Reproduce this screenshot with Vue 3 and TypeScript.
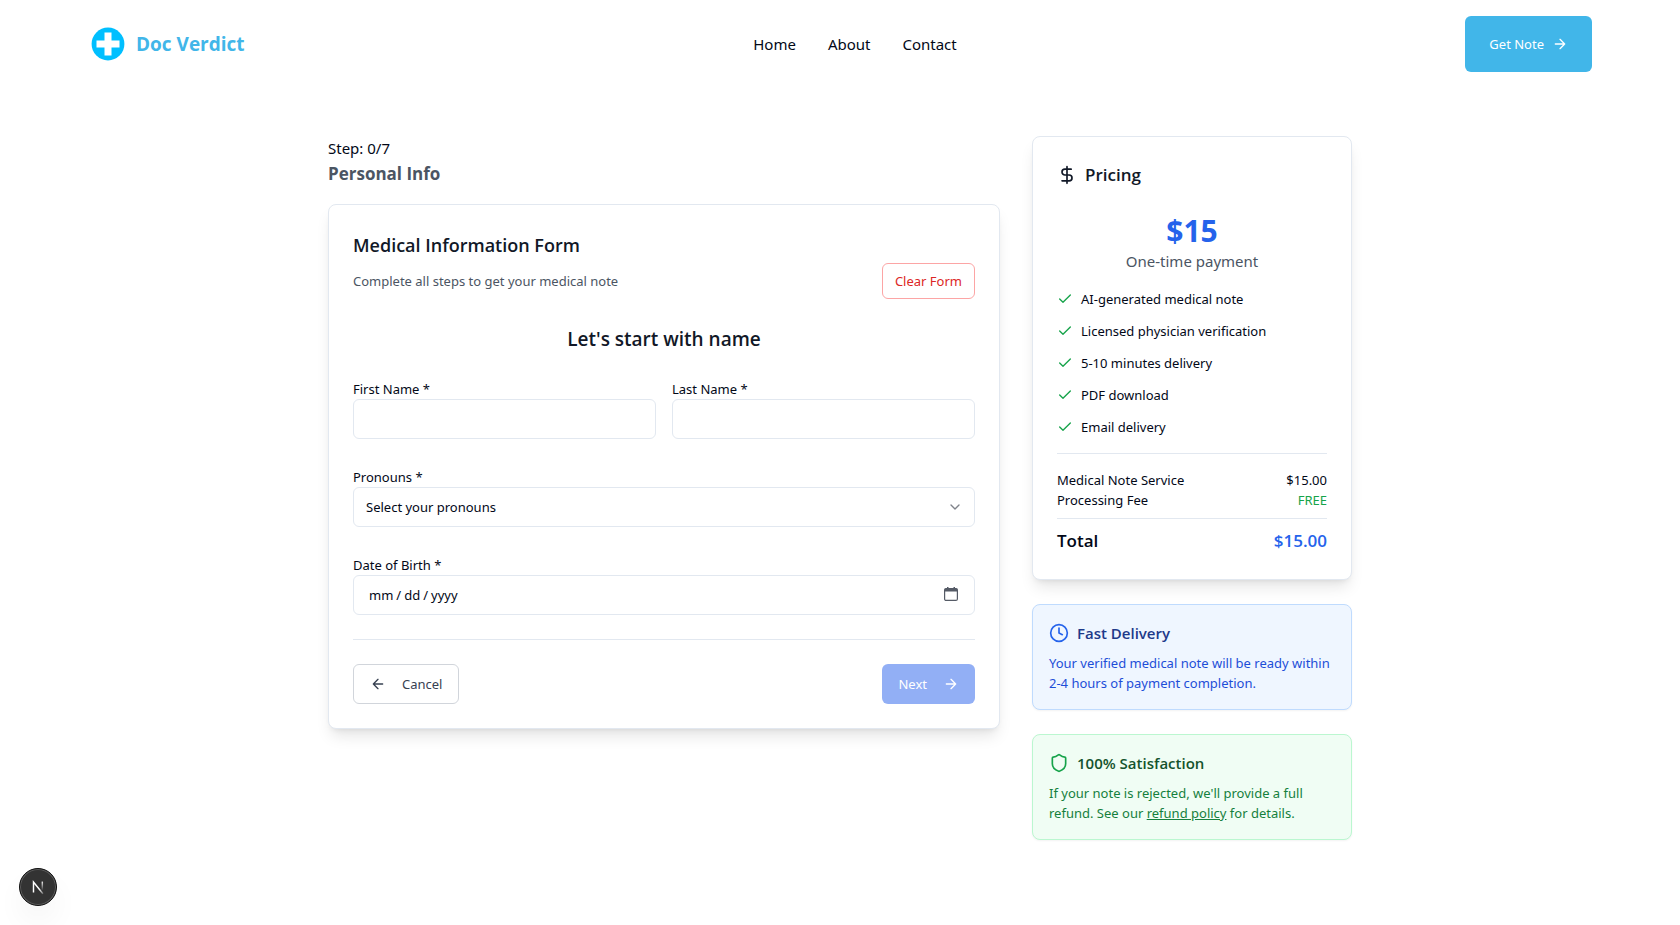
<script setup lang="ts">
import { ref } from 'vue'

const links: string[] = ['Home', 'About', 'Contact']
const features: string[] = [
  'AI-generated medical note',
  'Licensed physician verification',
  '5-10 minutes delivery',
  'PDF download',
  'Email delivery',
]

const firstName = ref('')
const lastName = ref('')
const pronouns = ref('')
const birthDate = ref('')

function clearForm(): void {
  firstName.value = ''
  lastName.value = ''
  pronouns.value = ''
  birthDate.value = ''
}
</script>

<template>
  <div class="page">
    <header class="header">
      <a class="brand" href="#">
        <svg class="logo" viewBox="0 0 40 40" aria-hidden="true">
          <circle cx="20" cy="20" r="16.4" fill="#00bfff" />
          <path d="M16.5 8.5h7v8h8v7h-8v8h-7v-8h-8v-7h8z" fill="#fff" />
        </svg>
        <span>Doc Verdict</span>
      </a>
      <nav class="nav">
        <a v-for="link in links" :key="link" href="#">{{ link }}</a>
      </nav>
      <button class="get-note" type="button">
        Get Note
        <svg class="icon" viewBox="0 0 24 24" aria-hidden="true"><path d="M5 12h14M12 5l7 7-7 7" /></svg>
      </button>
    </header>

    <main class="main">
      <section class="form-column">
        <p class="step">Step: 0/7</p>
        <h1 class="step-name">Personal Info</h1>

        <form class="card" @submit.prevent>
          <h2 class="form-title">Medical Information Form</h2>
          <div class="form-sub">
            <p>Complete all steps to get your medical note</p>
            <button class="btn clear" type="button" @click="clearForm">Clear Form</button>
          </div>

          <h3 class="question">Let's start with name</h3>

          <div class="fields">
            <div class="field">
              <label for="first-name">First Name *</label>
              <input id="first-name" v-model="firstName" class="control" type="text" />
            </div>
            <div class="field">
              <label for="last-name">Last Name *</label>
              <input id="last-name" v-model="lastName" class="control" type="text" />
            </div>
            <div class="field wide">
              <label for="pronouns">Pronouns *</label>
              <div class="control-wrap">
                <select id="pronouns" v-model="pronouns" class="control">
                  <option value="">Select your pronouns</option>
                  <option value="he">He/Him</option>
                  <option value="she">She/Her</option>
                  <option value="they">They/Them</option>
                </select>
                <svg class="icon chevron" viewBox="0 0 24 24" aria-hidden="true"><path d="m6 9 6 6 6-6" /></svg>
              </div>
            </div>
            <div class="field wide">
              <label for="birth-date">Date of Birth *</label>
              <div class="control-wrap">
                <input id="birth-date" v-model="birthDate" class="control date" type="date" />
                <svg class="calendar" viewBox="0 0 16 16" aria-hidden="true">
                  <rect x="1.600" y="2.600" width="12.800" height="11.800" rx="1.500" fill="none" stroke="#555b66" stroke-width="1.200" />
                  <path d="M1.600 5.500V3.500a1 1 0 0 1 1-1h10.800a1 1 0 0 1 1 1v2zM4 1h1.500v2H4zM10.500 1H12v2h-1.500z" fill="#555b66" />
                </svg>
              </div>
            </div>
          </div>

          <div class="actions">
            <button class="btn cancel" type="button">
              <svg class="icon" viewBox="0 0 24 24" aria-hidden="true"><path d="M19 12H5M12 19l-7-7 7-7" /></svg>
              Cancel
            </button>
            <button class="btn next" type="submit" disabled>
              Next
              <svg class="icon" viewBox="0 0 24 24" aria-hidden="true"><path d="M5 12h14M12 5l7 7-7 7" /></svg>
            </button>
          </div>
        </form>
      </section>

      <aside class="side">
        <section class="card">
          <h2 class="pricing-title">
            <svg class="icon large" viewBox="0 0 24 24" aria-hidden="true">
              <path d="M12 2v20M17 5H9.5a3.5 3.5 0 0 0 0 7h5a3.5 3.5 0 0 1 0 7H6" />
            </svg>
            Pricing
          </h2>
          <p class="price">$15</p>
          <p class="price-note">One-time payment</p>
          <ul class="features">
            <li v-for="feature in features" :key="feature">
              <svg class="icon" viewBox="0 0 24 24" aria-hidden="true"><path d="M20 6 9 17l-5-5" /></svg>
              <span>{{ feature }}</span>
            </li>
          </ul>
          <dl class="costs">
            <div><dt>Medical Note Service</dt><dd>$15.00</dd></div>
            <div><dt>Processing Fee</dt><dd class="free">FREE</dd></div>
            <div class="total"><dt>Total</dt><dd>$15.00</dd></div>
          </dl>
        </section>

        <section class="notice blue">
          <h3>
            <svg class="icon large" viewBox="0 0 24 24" aria-hidden="true">
              <circle cx="12" cy="12" r="10" /><path d="M12 6v6l4 2" />
            </svg>
            Fast Delivery
          </h3>
          <p>Your verified medical note will be ready within 2-4 hours of payment completion.</p>
        </section>

        <section class="notice green">
          <h3>
            <svg class="icon large" viewBox="0 0 24 24" aria-hidden="true">
              <path d="M20 13c0 5-3.500 7.500-7.660 8.950a1 1 0 0 1-.670-.010C7.500 20.500 4 18 4 13V6a1 1 0 0 1 1-1c2 0 4.500-1.200 6.240-2.720a1.170 1.170 0 0 1 1.520 0C14.510 3.810 17 5 19 5a1 1 0 0 1 1 1z" />
            </svg>
            100% Satisfaction
          </h3>
          <p>If your note is rejected, we'll provide a full refund. See our <a href="#">refund policy</a> for details.</p>
        </section>
      </aside>
    </main>

    <button class="dev-badge" type="button" aria-label="Open developer tools">
      <svg viewBox="0 0 40 40" fill="none" aria-hidden="true">
        <defs>
          <linearGradient id="stem" x1="0" y1="13" x2="0" y2="24" gradientUnits="userSpaceOnUse">
            <stop stop-color="#fff" /><stop offset="1" stop-color="#fff" stop-opacity="0" />
          </linearGradient>
          <linearGradient id="diagonal" x1="15" y1="14" x2="26" y2="28" gradientUnits="userSpaceOnUse">
            <stop offset=".6" stop-color="#fff" /><stop offset="1" stop-color="#fff" stop-opacity=".2" />
          </linearGradient>
        </defs>
        <path d="M15 26V14.500L25.500 27.500" stroke="url(#diagonal)" stroke-width="1.600" />
        <path d="M24.800 14v10" stroke="url(#stem)" stroke-width="1.600" />
      </svg>
    </button>
  </div>
</template>

<style>
body {
  margin: 0;
  background: #fff;
}
</style>

<style scoped>
.page {
  min-height: 100vh;
  color: #020817;
  font-family: "Segoe UI", "Noto Sans", "Open Sans", sans-serif;
  font-size: 13px;
  line-height: 20px;
}

.page *,
.page *::before {
  box-sizing: border-box;
}

h1,
h2,
h3,
p,
ul,
dl,
dd {
  margin: 0;
  padding: 0;
}

h1,
h2,
h3,
.brand,
.price,
.total {
  font-family: "Segoe UI", "Open Sans", "Noto Sans", sans-serif;
}

button,
input,
select {
  margin: 0;
  font: inherit;
  color: inherit;
}

a {
  color: inherit;
  text-decoration: none;
}

.icon {
  flex: none;
  width: 16px;
  height: 16px;
  fill: none;
  stroke: currentColor;
  stroke-width: 2;
  stroke-linecap: round;
  stroke-linejoin: round;
}

.icon.large {
  width: 20px;
  height: 20px;
}

.header {
  display: flex;
  align-items: center;
  justify-content: space-between;
  max-width: 1536px;
  margin: 0 auto;
  padding: 16px;
}

.brand {
  display: flex;
  align-items: center;
  gap: 8px;
  color: #41b6e9;
  font-size: 19px;
  font-weight: 700;
  line-height: 28px;
}

.logo {
  width: 40px;
  height: 40px;
}

.nav {
  display: flex;
  gap: 32px;
  font-size: 15px;
  line-height: 24px;
}

.get-note {
  display: flex;
  align-items: center;
  justify-content: center;
  gap: 8px;
  height: 56px;
  padding: 0 24px;
  border: 0;
  border-radius: 6px;
  background: #41b6e9;
  color: #fff;
}

.main {
  display: grid;
  grid-template-columns: repeat(3, 1fr);
  gap: 32px;
  align-items: start;
  max-width: 1056px;
  margin: 0 auto;
  padding: 48px 16px;
}

.form-column {
  grid-column: span 2;
}

.step {
  font-size: 15px;
  line-height: 24px;
}

.step-name {
  margin-bottom: 16px;
  color: #4b5563;
  font-size: 17px;
  font-weight: 700;
  line-height: 28px;
}

.card {
  padding: 24px;
  border: 1px solid #e2e8f0;
  border-radius: 8px;
  background: #fff;
  box-shadow: 0 10px 15px -3px rgb(0 0 0 / 10%), 0 4px 6px -4px rgb(0 0 0 / 10%);
}

.form-title {
  color: #111827;
  font-size: 18px;
  font-weight: 600;
  line-height: 32px;
}

.form-sub {
  display: flex;
  align-items: center;
  justify-content: space-between;
  margin: 2px 0 24px;
  color: #4b5563;
}

.btn {
  display: flex;
  align-items: center;
  justify-content: center;
  height: 40px;
  padding: 0 16px;
  border: 1px solid transparent;
  border-radius: 6px;
  background: #fff;
}

.btn.clear {
  height: 36px;
  padding: 0 12px;
  border-color: #fca5a5;
  color: #dc2626;
}

.question {
  margin-bottom: 24px;
  color: #111827;
  font-size: 19px;
  font-weight: 600;
  line-height: 32px;
  text-align: center;
}

.fields {
  display: grid;
  grid-template-columns: 1fr 1fr;
  gap: 28px 16px;
}

.field {
  display: flex;
  flex-direction: column;
}

.wide {
  grid-column: 1 / -1;
}

.control {
  display: block;
  width: 100%;
  height: 40px;
  padding: 0 12px;
  border: 1px solid #e2e8f0;
  border-radius: 6px;
  background: #fff;
}

.control-wrap {
  position: relative;
}

select.control {
  appearance: none;
}

.chevron {
  position: absolute;
  top: 12px;
  right: 12px;
  opacity: 0.5;
  pointer-events: none;
}

.control.date {
  padding: 0 14px;
}

.date::-webkit-datetime-edit-text {
  padding: 0 2px;
}

.date::-webkit-calendar-picker-indicator {
  opacity: 0;
}

.calendar {
  position: absolute;
  top: 11px;
  right: 16px;
  width: 16px;
  height: 16px;
  pointer-events: none;
}

.actions {
  display: flex;
  justify-content: space-between;
  margin-top: 24px;
  padding-top: 24px;
  border-top: 1px solid #e2e8f0;
}

.btn.cancel {
  gap: 16px;
  border-color: #d1d5db;
  color: #374151;
}

.btn.next {
  gap: 16px;
  border: 0;
  background: #92aff5;
  color: #fff;
}

.side {
  display: grid;
  gap: 24px;
}

.pricing-title {
  display: flex;
  align-items: center;
  gap: 8px;
  margin-bottom: 24px;
  color: #111827;
  font-size: 17px;
  font-weight: 600;
  line-height: 28px;
}

.price {
  color: #2563eb;
  font-size: 30px;
  font-weight: 700;
  line-height: 36px;
  text-align: center;
}

.price-note {
  color: #4b5563;
  font-size: 15px;
  line-height: 24px;
  text-align: center;
}

.features {
  display: grid;
  gap: 12px;
  margin: 16px 0;
  list-style: none;
}

.features li {
  display: flex;
  align-items: center;
  gap: 8px;
}

.features .icon {
  color: #16a34a;
}

.costs {
  padding-top: 16px;
  border-top: 1px solid #e2e8f0;
}

.costs div {
  display: flex;
  justify-content: space-between;
}

.costs .free {
  color: #16a34a;
}

.costs .total {
  margin-top: 8px;
  padding-top: 8px;
  border-top: 1px solid #e2e8f0;
  font-size: 17px;
  font-weight: 600;
  line-height: 28px;
}

.total dd {
  color: #2563eb;
}

.notice {
  padding: 16px;
  border: 1px solid;
  border-radius: 8px;
  box-shadow: 0 1px 2px rgb(0 0 0 / 5%);
}

.notice h3 {
  display: flex;
  align-items: center;
  gap: 8px;
  margin-bottom: 8px;
  font-size: 15px;
  font-weight: 600;
  line-height: 24px;
}

.blue {
  border-color: #bfdbfe;
  background: #eff6ff;
  color: #1d4ed8;
}

.blue h3 {
  color: #1e3a8a;
}

.blue .icon {
  color: #2563eb;
}

.green {
  border-color: #bbf7d0;
  background: #f0fdf4;
  color: #15803d;
}

.green h3 {
  color: #14532d;
}

.green .icon {
  color: #16a34a;
}

.notice a {
  text-decoration: underline;
}

.dev-badge {
  position: fixed;
  bottom: 19px;
  left: 19px;
  width: 38px;
  height: 38px;
  padding: 0;
  border: 1px solid #111;
  border-radius: 50%;
  background: #333;
  box-shadow: inset 0 0 0 1px #5c5c5c, 0 16px 32px -8px rgb(0 0 0 / 12%);
}

.dev-badge svg {
  display: block;
  width: 36px;
  height: 36px;
}
</style>
